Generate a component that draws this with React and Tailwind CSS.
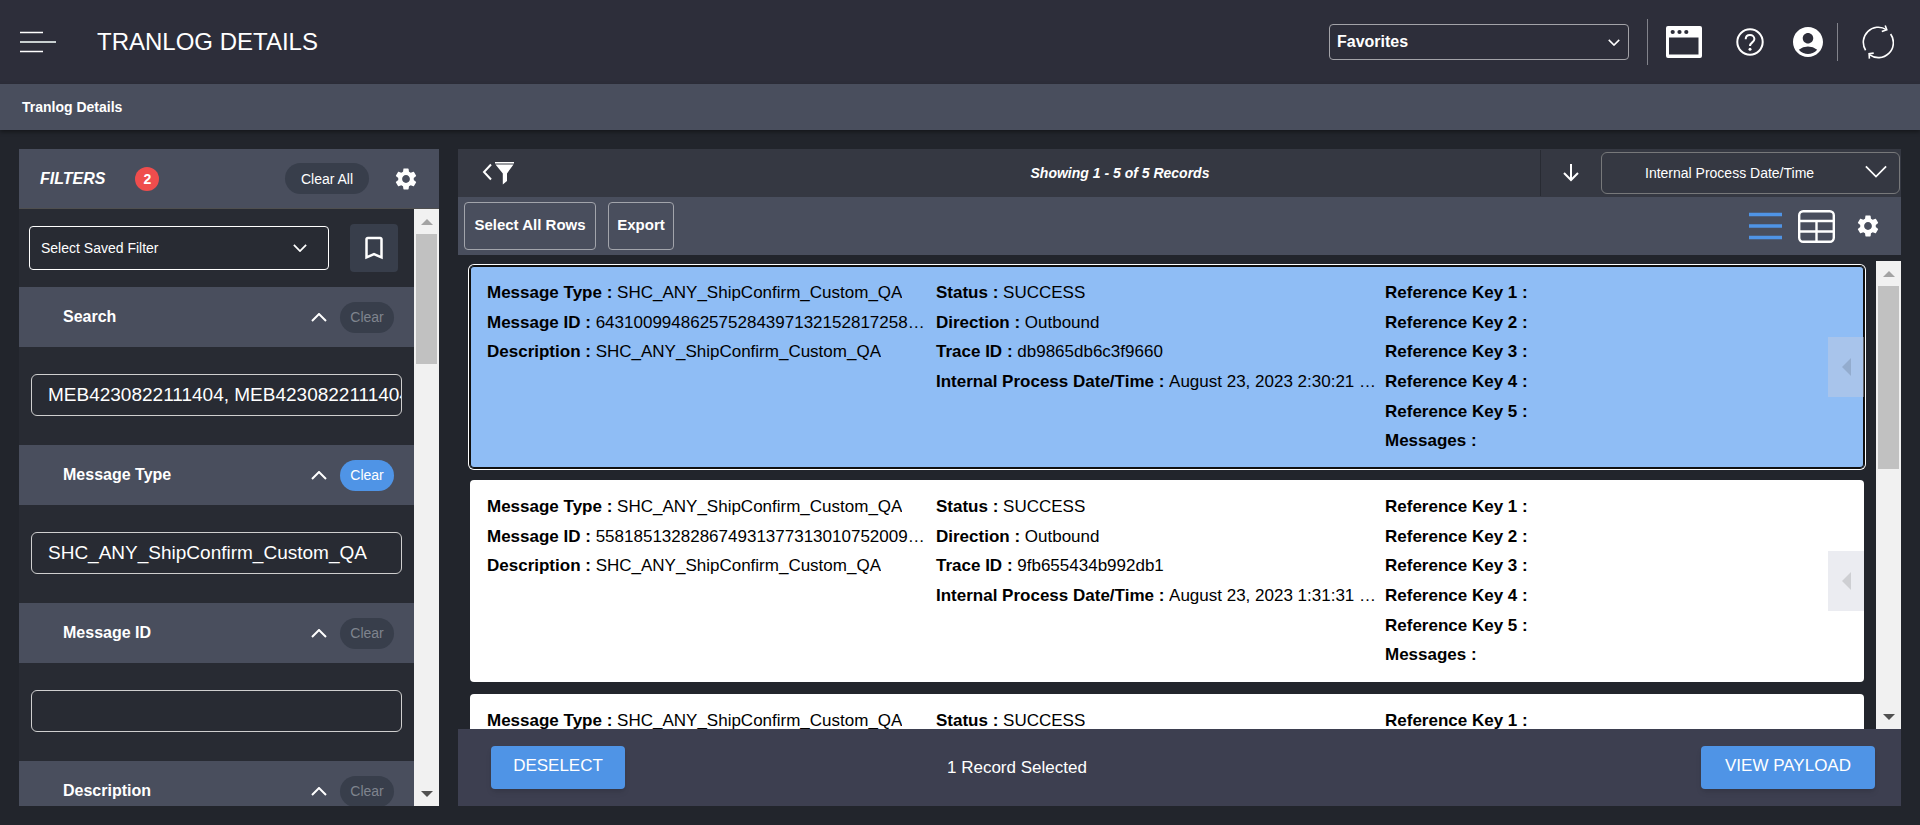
import React from "react";
import { MdAccountCircle, MdBookmarkBorder, MdSettings } from "react-icons/md";

const FILTERS = [
  { id: "search", label: "Search", value: "MEB4230822111404, MEB4230822111404", active: false },
  { id: "message-type", label: "Message Type", value: "SHC_ANY_ShipConfirm_Custom_QA", active: true },
  { id: "message-id", label: "Message ID", value: "", active: false },
  { id: "description", label: "Description", value: "", active: false },
];

const RECORDS = [
  { id: "643100994862575284397132152817258…", trace: "db9865db6c3f9660", date: "August 23, 2023 2:30:21 …", selected: true },
  { id: "558185132828674931377313010752009…", trace: "9fb655434b992db1", date: "August 23, 2023 1:31:31 …", selected: false },
  { id: "", trace: "", date: "", selected: false },
];

function Chevron({ up = false, className, width = 2 }) {
  return (
    <svg viewBox="0 0 16 9" fill="none" stroke="currentColor" strokeWidth={width} className={className} aria-hidden="true">
      <path d={up ? "M1 8l7-7 7 7" : "M1 1l7 7 7-7"} />
    </svg>
  );
}

function Scrollbar({ thumbClass }) {
  return (
    <div className="flex w-[25px] shrink-0 flex-col items-center bg-[#f1f1f1]" aria-hidden="true">
      <div className="flex h-[25px] shrink-0 items-center">
        <svg viewBox="0 0 12 6" className="h-[6px] w-3 fill-[#a3a3a3]"><path d="M6 0l6 6H0z" /></svg>
      </div>
      <div className={`w-[21px] bg-[#c1c1c1] ${thumbClass}`} />
      <div className="mt-auto flex h-[25px] shrink-0 items-center">
        <svg viewBox="0 0 12 6" className="h-[6px] w-3 fill-[#505050]"><path d="M0 0h12L6 6z" /></svg>
      </div>
    </div>
  );
}

function Header() {
  return (
    <header className="flex h-[84px] shrink-0 items-center bg-[#2d2e3a] pl-5 pr-[26px]">
      <button type="button" aria-label="Open menu">
        <svg viewBox="0 0 36 22" className="h-[22px] w-9" fill="none">
          <path d="M0 1.500h23M0 20.500h23" stroke="#fff" strokeWidth="1.400" />
          <path d="M0 11h36" stroke="#c8cfd0" strokeWidth="2" />
        </svg>
      </button>
      <h1 className="ml-[41px] text-2xl">TRANLOG DETAILS</h1>
      <div className="relative ml-auto w-[300px]">
        <select aria-label="Favorites" className="h-9 w-full appearance-none rounded border border-[#a3a3a8] bg-transparent pl-[7px] pr-8 text-base font-bold">
          <option>Favorites</option>
        </select>
        <Chevron className="pointer-events-none absolute right-[9px] top-[15px] h-[7px] w-3" />
      </div>
      <div className="ml-[18px] h-[46px] w-px bg-[#82838b]" />
      <button type="button" aria-label="Open window" className="ml-[18px]">
        <svg viewBox="0 0 36 32" className="h-8 w-9">
          <path fillRule="evenodd" fill="#fff" d="M2 0h32a2 2 0 0 1 2 2v28a2 2 0 0 1-2 2H2a2 2 0 0 1-2-2V2a2 2 0 0 1 2-2zM3 11.500V28.500H32.500V11.500z" />
          <g fill="#2d2e3a"><circle cx="6.700" cy="6" r="2.100" /><circle cx="13.500" cy="6" r="2.100" /><circle cx="20.300" cy="6" r="2.100" /></g>
        </svg>
      </button>
      <button type="button" aria-label="Help" className="ml-[34px]">
        <svg viewBox="0 0 28 28" className="size-7" fill="none" stroke="#fff" strokeWidth="2">
          <circle cx="14" cy="14" r="12.700" />
          <path d="M9.700 11.300c0-2.600 1.800-4.300 4.300-4.300s4.400 1.700 4.400 4.100c0 3.200-4.400 3.400-4.400 6.900" />
          <circle cx="14" cy="21.200" r="1.500" fill="#fff" stroke="none" />
        </svg>
      </button>
      <button type="button" aria-label="Account" className="ml-[26px]"><MdAccountCircle size={36} /></button>
      <div className="ml-[11px] h-[38px] w-px bg-[#82838b]" />
      <button type="button" aria-label="Refresh" className="ml-6">
        <svg viewBox="0 0 32 34" className="h-[34px] w-8" fill="none" stroke="#fff" strokeWidth="1.600">
          <path d="M3.600 25.200A15 15 0 0 1 24.400 4.600M28.600 9A15 15 0 0 1 7.400 29.700" />
          <path d="M23.200.500l1.600 4.200-5 1.900M7.400 33.600l-.3-4.800 4.600-.700" />
        </svg>
      </button>
    </header>
  );
}

function FilterSection({ filter }) {
  return (
    <section>
      <div className="flex h-[60px] items-center bg-[#494e5d] pl-11 pr-5">
        <label htmlFor={filter.id} className="flex-1 text-base font-bold">{filter.label}</label>
        <button type="button" aria-label={`Collapse ${filter.label}`} className="mr-[13px]">
          <Chevron up className="h-[9px] w-4" />
        </button>
        <button
          type="button"
          disabled={!filter.active}
          className={`h-[31px] w-[54px] rounded-full text-sm ${filter.active ? "bg-[#4f94e6] text-white" : "bg-[#383e4b] text-[#7f848e]"}`}
        >
          Clear
        </button>
      </div>
      <div className="px-3 pb-[29px] pt-[27px]">
        <input
          id={filter.id}
          type="text"
          defaultValue={filter.value}
          className="h-[42px] w-full rounded-md border border-[#cfcfcf] bg-transparent pl-4 text-[19px]"
        />
      </div>
    </section>
  );
}

function FilterPanel() {
  return (
    <aside className="flex w-[420px] shrink-0 flex-col">
      <div className="flex h-[60px] shrink-0 items-center border-b border-[#4f4f4f] bg-[#494e5d] pl-[21px] pr-5">
        <h2 className="text-base font-bold italic">FILTERS</h2>
        <span className="ml-[30px] flex size-6 items-center justify-center rounded-full bg-[#ef4d4d] text-sm font-bold">2</span>
        <button type="button" className="ml-auto h-[31px] w-[84px] rounded-full bg-[#383e4b] text-sm">Clear All</button>
        <button type="button" aria-label="Filter settings" className="ml-6"><MdSettings size={26} /></button>
      </div>
      <div className="flex min-h-0 flex-1">
        <div className="min-w-0 flex-1 overflow-hidden bg-[#282b33]">
          <div className="flex items-center gap-[21px] px-4 pb-[15px] pl-[10px] pt-[15px]">
            <div className="relative flex-1">
              <select aria-label="Saved filter" className="h-11 w-full appearance-none rounded border border-white bg-transparent pl-[11px] pr-10 text-sm">
                <option>Select Saved Filter</option>
              </select>
              <Chevron className="pointer-events-none absolute right-[22px] top-[18px] h-2 w-[14px]" />
            </div>
            <button type="button" aria-label="Save filter" className="flex size-12 items-center justify-center rounded bg-[#383e4b]">
              <MdBookmarkBorder size={30} />
            </button>
          </div>
          {FILTERS.map((filter) => <FilterSection key={filter.id} filter={filter} />)}
        </div>
        <Scrollbar thumbClass="h-[130px]" />
      </div>
    </aside>
  );
}

function Field({ label, children }) {
  return (
    <div className="flex min-w-0 items-center">
      <dt className="shrink-0 font-bold">{label} :&nbsp;</dt>
      <dd className="truncate">{children}</dd>
    </div>
  );
}

function RecordCard({ record }) {
  return (
    <article
      className={`relative shrink-0 rounded p-3 pl-[17px] pr-[30px] text-[17px] text-black ${
        record.selected
          ? "bg-[#8fbdf5] shadow-[inset_0_0_0_1px_#101010,0_0_0_1px_#101010,0_0_0_2px_#ffffff]"
          : "bg-white"
      }`}
    >
      <dl className="grid h-[178px] grid-flow-col grid-cols-3 grid-rows-6">
        <Field label="Message Type">SHC_ANY_ShipConfirm_Custom_QA</Field>
        <Field label="Message ID">{record.id}</Field>
        <Field label="Description">SHC_ANY_ShipConfirm_Custom_QA</Field>
        <div className="row-span-3" />
        <Field label="Status">SUCCESS</Field>
        <Field label="Direction">Outbound</Field>
        <Field label="Trace ID">{record.trace}</Field>
        <Field label="Internal Process Date/Time">{record.date}</Field>
        <div className="row-span-2" />
        <Field label="Reference Key 1" />
        <Field label="Reference Key 2" />
        <Field label="Reference Key 3" />
        <Field label="Reference Key 4" />
        <Field label="Reference Key 5" />
        <Field label="Messages" />
      </dl>
      <button
        type="button"
        aria-label="Show record actions"
        className="absolute right-0 top-1/2 flex h-[60px] w-9 -translate-y-1/2 items-center justify-center bg-[#cdcfdc]/40"
      >
        <svg viewBox="0 0 9 18" className="h-[18px] w-[9px] fill-black/12"><path d="M9 0v18L0 9z" /></svg>
      </button>
    </article>
  );
}

function Results() {
  return (
    <main className="flex min-w-0 flex-1 flex-col">
      <div className="flex h-12 shrink-0 items-center bg-[#353842]">
        <div className="w-[242px] pl-6">
          <button type="button" aria-label="Hide filters" className="block">
            <svg viewBox="0 0 33 24" className="h-6 w-[33px]">
              <path d="M9 3.500L2 11l7 7.500" fill="none" stroke="#fff" strokeWidth="2" />
              <path d="M13 1h19v1.500H13zM13.500 3.500h18L25 12.500V20l-4.200 3.500v-11z" fill="#fff" />
            </svg>
          </button>
        </div>
        <p className="flex-1 text-center text-sm font-bold italic">Showing 1 - 5 of 5 Records</p>
        <div className="h-[46px] w-px bg-[#282b33]" />
        <button type="button" aria-label="Sort descending" className="mx-[22px]">
          <svg viewBox="0 0 16 18" className="h-[18px] w-4" fill="none" stroke="#fff" strokeWidth="2">
            <path d="M8 0v16M1 9l7 7 7-7" />
          </svg>
        </button>
        <div className="relative mr-px w-[299px]">
          <select aria-label="Sort by" className="h-[42px] w-full appearance-none rounded-md border border-[#77787a] bg-transparent pl-[43px] pr-10 text-sm">
            <option>Internal Process Date/Time</option>
          </select>
          <Chevron width={1.2} className="pointer-events-none absolute right-3 top-[13px] h-[13px] w-6" />
        </div>
      </div>

      <div className="flex h-[58px] shrink-0 items-center bg-[#494e5d] pl-[6px] pr-5">
        <button type="button" className="h-12 w-[132px] rounded border border-[#a2a4ab] pb-[2px] text-[15px] font-bold">Select All Rows</button>
        <button type="button" className="ml-3 h-12 w-[66px] rounded border border-[#a2a4ab] pb-[2px] text-[15px] font-bold">Export</button>
        <button type="button" aria-label="List view" className="ml-auto">
          <svg viewBox="0 0 33 28" className="h-7 w-[33px]" stroke="#4f94e6" strokeWidth="3.500"><path d="M0 2.500h33M0 14h33M0 25.500h33" /></svg>
        </button>
        <button type="button" aria-label="Table view" className="ml-4">
          <svg viewBox="0 0 37 33" className="h-[33px] w-[37px]" fill="none" stroke="#fff" strokeWidth="2.400">
            <rect x="1.200" y="1.200" width="34.600" height="30.600" rx="4" />
            <path d="M1 11h35M1 21.500h35M18.500 11v21" />
          </svg>
        </button>
        <button type="button" aria-label="Table settings" className="ml-5"><MdSettings size={26} /></button>
      </div>

      <div className="flex min-h-0 flex-1 pt-[6px]">
        <div className="flex min-w-0 flex-1 flex-col gap-3 overflow-hidden px-3 pt-[5px]">
          {RECORDS.map((record, index) => <RecordCard key={index} record={record} />)}
        </div>
        <Scrollbar thumbClass="h-[183px]" />
      </div>

      <footer className="grid h-[77px] shrink-0 grid-cols-3 items-center bg-[#3d3f50]">
        <div className="pl-[33px]">
          <button type="button" className="h-[43px] w-[134px] rounded bg-[#4f94e6] pb-1 text-[17px] shadow-md">DESELECT</button>
        </div>
        <p className="pl-2 text-[17px]">1 Record Selected</p>
        <div className="pr-[26px] text-right">
          <button type="button" className="h-[43px] w-[174px] rounded bg-[#4f94e6] pb-1 text-[17px] shadow-md">VIEW PAYLOAD</button>
        </div>
      </footer>
    </main>
  );
}

export default function App() {
  return (
    <div className="flex h-screen flex-col overflow-hidden bg-[#22252c] font-['Liberation_Sans',Arial,sans-serif] text-white">
      <Header />
      <nav aria-label="Breadcrumb" className="flex h-[46px] shrink-0 items-center bg-[#494e5d] px-[22px] text-sm font-bold shadow-[0_2px_4px_rgba(0,0,0,0.4)]">
        <a href="#tranlog-details">Tranlog Details</a>
      </nav>
      <div className="flex min-h-0 flex-1 gap-[19px] p-[19px]">
        <FilterPanel />
        <Results />
      </div>
    </div>
  );
}
